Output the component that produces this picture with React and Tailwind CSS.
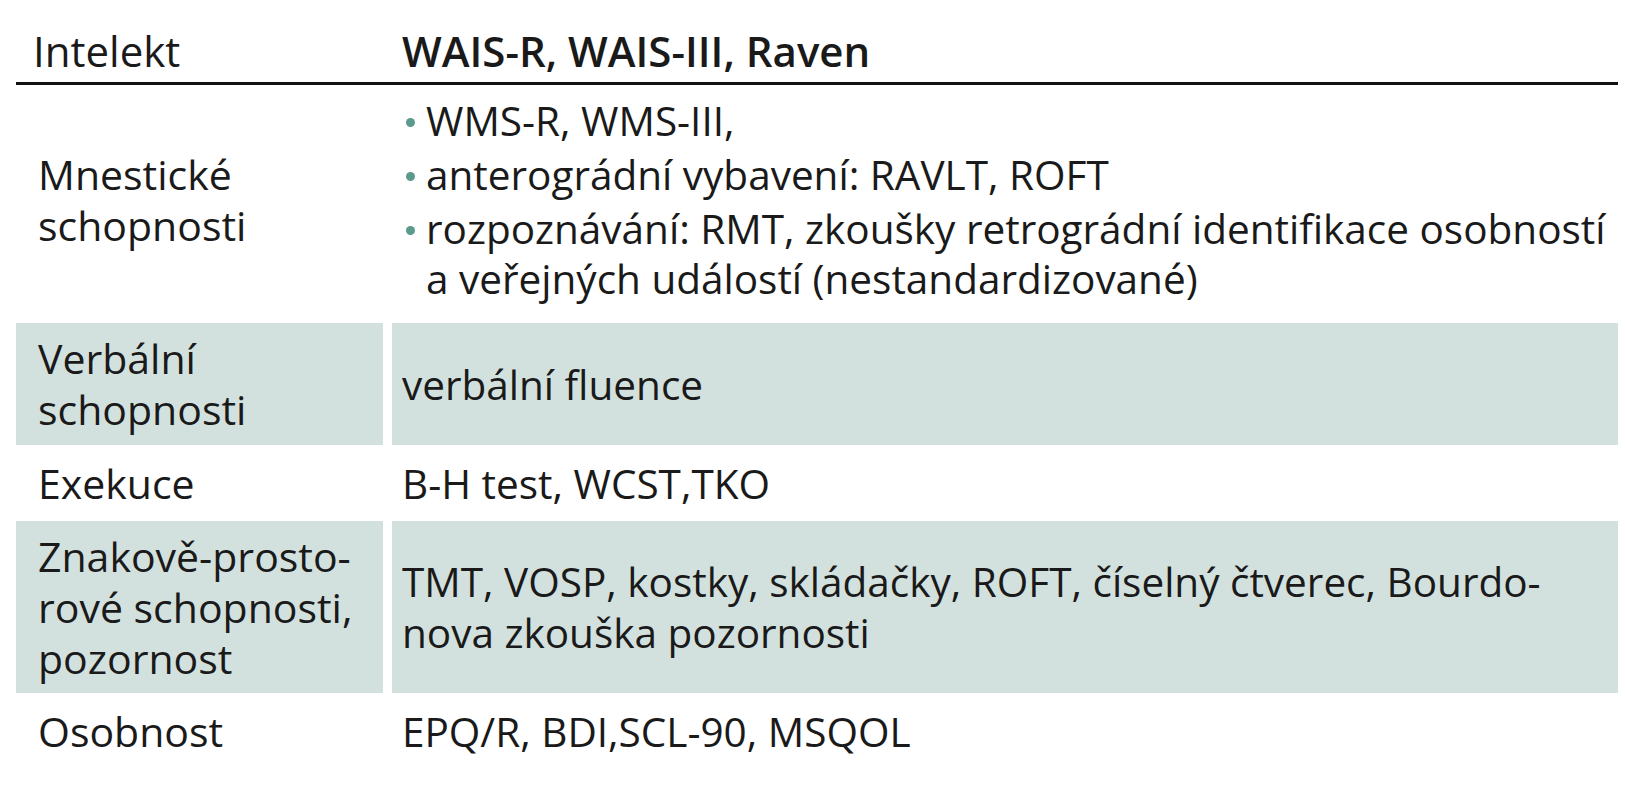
import React from 'react';

const rows = [
  {
    label: ['Mnestické', 'schopnosti'],
    height: 'h-[230px]',
    shaded: false,
    bullets: [
      ['WMS-R, WMS-III,'],
      ['anterográdní vybavení: RAVLT, ROFT'],
      ['rozpoznávání: RMT, zkoušky retrográdní identifikace osobností', 'a veřejných událostí (nestandardizované)'],
    ],
  },
  { label: ['Verbální', 'schopnosti'], height: 'h-[122px]', shaded: true, text: ['verbální fluence'] },
  { label: ['Exekuce'], height: 'h-[60px]', shaded: false, text: ['B-H test, WCST,TKO'] },
  {
    label: ['Znakově-prosto-', 'rové schopnosti,', 'pozornost'],
    height: 'h-[172px]',
    shaded: true,
    text: ['TMT, VOSP, kostky, skládačky, ROFT, číselný čtverec, Bourdo-', 'nova zkouška pozornosti'],
  },
  { label: ['Osobnost'], height: 'h-[60px]', shaded: false, text: ['EPQ/R, BDI,SCL-90, MSQOL'] },
];

const Lines = ({ lines }) => (
  <div className="whitespace-nowrap">
    {lines.map((line, i) => (
      <div key={i}>{line}</div>
    ))}
  </div>
);

export default function App() {
  return (
    <div
      className="min-h-[800px] w-[1625px] bg-white pl-[16px] pr-[7px] leading-[51px] text-[#1a1a1a]"
      style={{ fontFamily: '"Open Sans", "Noto Sans", sans-serif' }}
    >
      {/* Header */}
      <div className="flex gap-[9px] border-b-[3px] border-[#111] pt-[25px] pb-[5px] text-[42px] leading-[52px]">
        <div className="w-[367px] shrink-0 pl-[17px] font-medium">Intelekt</div>
        <div className="min-w-0 flex-1 pl-[10px] font-semibold">WAIS-R, WAIS-III, Raven</div>
      </div>

      {/* Body */}
      <div className="flex flex-col gap-[8px]">
        {rows.map((row, i) => (
          <div key={i} className={`flex gap-[9px] ${row.height}`}>
            <div
              className={`flex w-[367px] shrink-0 items-center pl-[22px] text-[41px] font-medium ${row.shaded ? 'bg-[#d3e1de]' : ''}`}
            >
              <Lines lines={row.label} />
            </div>
            <div
              className={`flex min-w-0 flex-1 items-center pl-[10px] text-[40.5px] ${row.shaded ? 'bg-[#d3e1de]' : ''}`}
            >
              {row.bullets ? (
                <ul className="flex flex-col gap-[4px] leading-[50px]">
                  {row.bullets.map((b, j) => (
                    <li key={j} className="flex">
                      <span className="mt-[22px] mr-[11px] ml-[4px] h-[9px] w-[9px] shrink-0 rounded-full bg-[#5b9a8c]" />
                      <Lines lines={b} />
                    </li>
                  ))}
                </ul>
              ) : (
                <Lines lines={row.text} />
              )}
            </div>
          </div>
        ))}
      </div>
    </div>
  );
}
